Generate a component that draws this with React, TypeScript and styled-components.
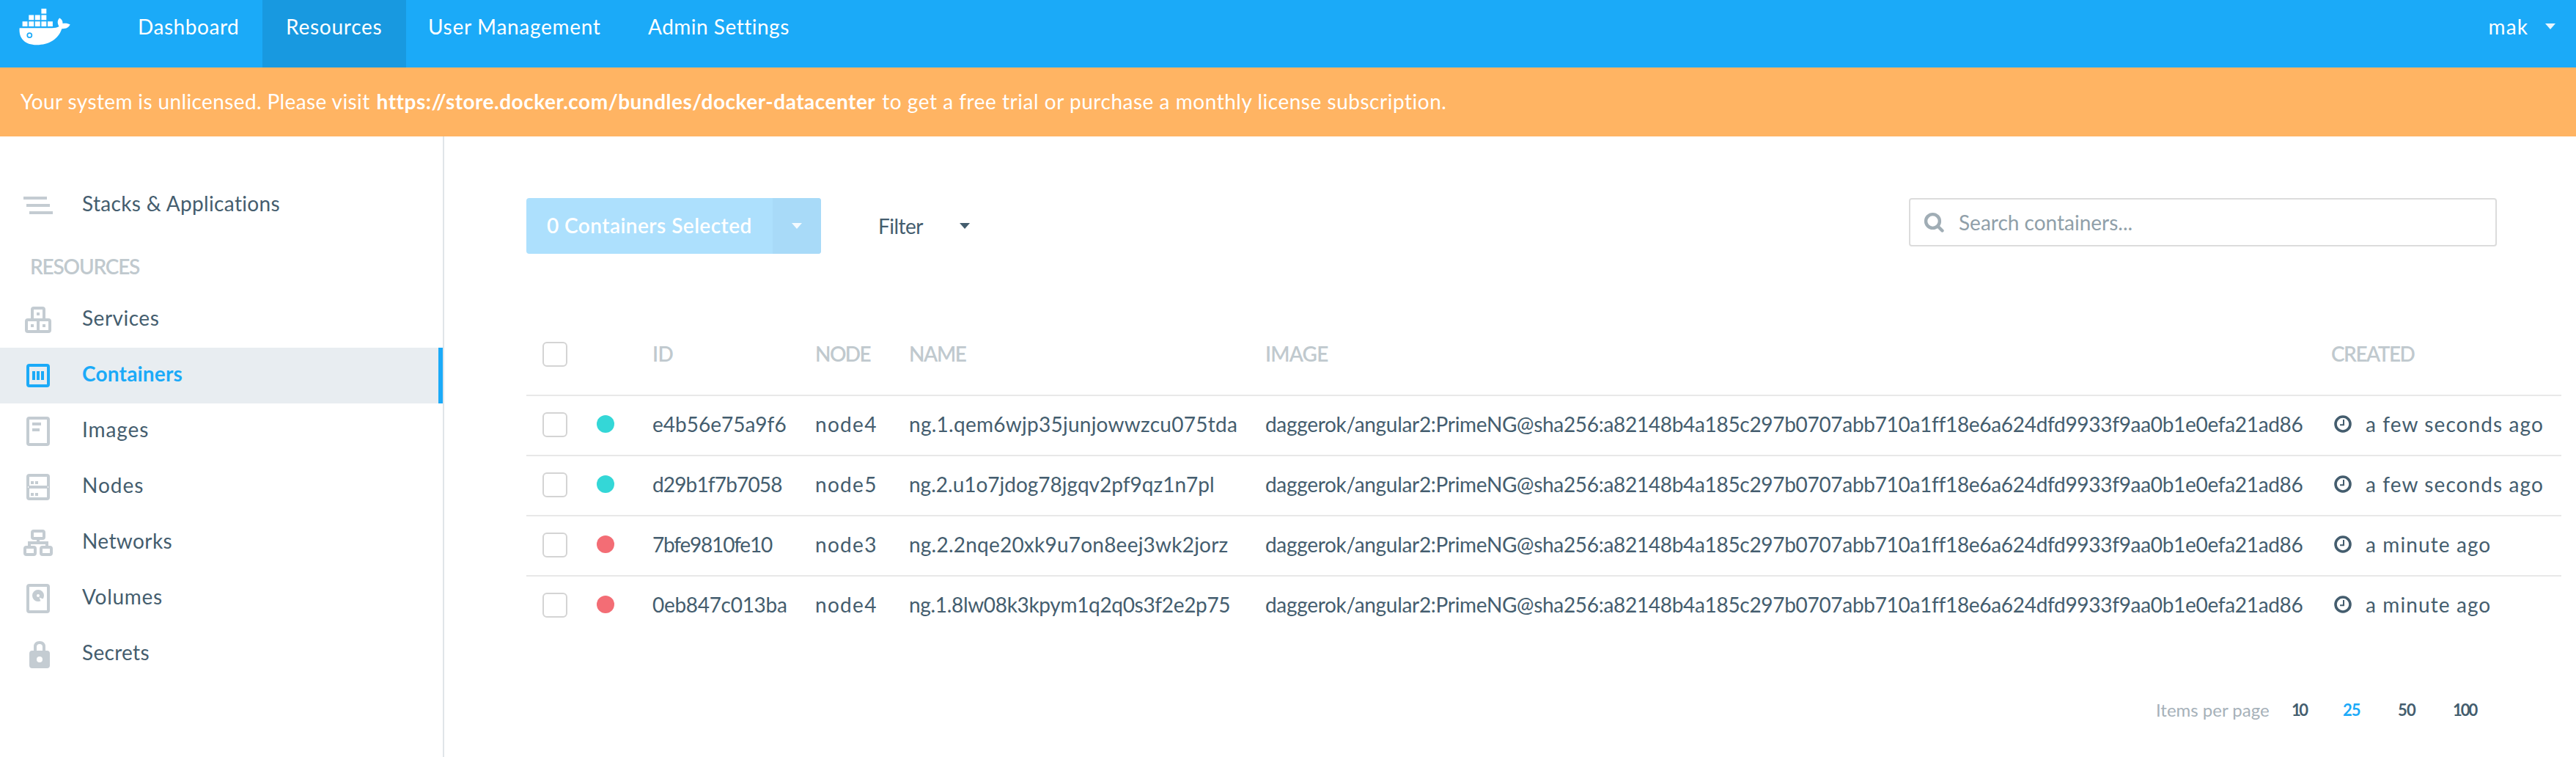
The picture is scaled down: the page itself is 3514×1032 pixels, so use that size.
import React from "react";
import styled, { createGlobalStyle } from "styled-components";

const color = {
  blue: "#1baaf8",
  blueDark: "#1899e0",
  orange: "#ffb463",
  text: "#445d6e",
  muted: "#c0c9ce",
  icon: "#c4ccd2",
  line: "#e8e8e8",
};

const GlobalStyle = createGlobalStyle`
  * { box-sizing: border-box; }
  body {
    margin: 0;
    background: #fff;
    color: ${color.text};
    font: 400 28px/34px Lato, "Open Sans", sans-serif;
  }
`;

const Text = styled.span<{ $ls?: number }>`
  white-space: nowrap;
  letter-spacing: ${(p) => p.$ls ?? 0}px;
`;

const Page = styled.div`
  display: flex;
  flex-direction: column;
  width: 3514px;
  height: 1032px;
  overflow: hidden;
`;

/* Top bar */
const TopBar = styled.header`
  display: flex;
  height: 92px;
  background: ${color.blue};
  color: #fff;
`;

const Brand = styled.div`
  width: 158px;
  padding: 10px 0 0 24px;
`;

const NavTab = styled.a<{ $width: number; $active?: boolean }>`
  width: ${(p) => p.$width}px;
  padding: 19px 0 0 ${(p) => (p.$active ? 32 : 30)}px;
  background: ${(p) => (p.$active ? color.blueDark : "transparent")};
`;

const UserMenu = styled.div`
  display: flex;
  align-items: center;
  gap: 23px;
  height: 34px;
  margin: 19px 28px 0 auto;
`;

/* License banner */
const Banner = styled.div`
  display: flex;
  align-items: center;
  gap: 9px;
  height: 94px;
  padding: 0 0 3px 28px;
  background: ${color.orange};
  color: #fff;
`;

const BannerLink = styled(Text)`
  font-weight: 700;
`;

/* Sidebar */
const Body = styled.div`
  display: flex;
  flex: 1;
`;

const Sidebar = styled.nav`
  width: 606px;
  padding-top: 56px;
  border-right: 2px solid #e0e5e9;
`;

const SideItem = styled.a<{ $active?: boolean }>`
  display: flex;
  align-items: center;
  gap: 36px;
  height: 76px;
  padding-left: 28px;
  color: ${(p) => (p.$active ? color.blue : color.text)};
  font-weight: ${(p) => (p.$active ? 700 : 400)};
  background: ${(p) => (p.$active ? "#e8edf1" : "transparent")};
  border-right: ${(p) => (p.$active ? `6px solid ${color.blue}` : "0")};
`;

const SideLabel = styled(Text)`
  padding-bottom: 6px;
`;

const SideHeading = styled.div`
  height: 80px;
  padding: 28px 0 0 41px;
  color: ${color.muted};
  font-weight: 600;
`;

const IconBox = styled.svg<{ $active?: boolean }>`
  width: 48px;
  height: 48px;
  flex: none;
  color: ${(p) => (p.$active ? color.blue : color.icon)};
  fill: none;
  stroke: currentColor;
  stroke-width: 4;
`;

/* Main area */
const Main = styled.main`
  display: flex;
  flex-direction: column;
  flex: 1;
  padding: 84px 20px 0 112px;
`;

const Toolbar = styled.div`
  display: flex;
  align-items: flex-start;
  height: 158px;
`;

const SplitButton = styled.div`
  display: flex;
  width: 402px;
  height: 76px;
  border-radius: 4px;
  overflow: hidden;
  color: #fff;
  background: #ade0fd;
`;

const SplitLabel = styled.div`
  width: 336px;
  padding: 20px 0 0 28px;
  font-weight: 600;
`;

const SplitCaret = styled.div`
  display: flex;
  flex: 1;
  align-items: center;
  justify-content: center;
  background: #a8daf8;
`;

const FilterMenu = styled.div`
  display: flex;
  align-items: center;
  gap: 50px;
  height: 76px;
  margin-left: 78px;
`;

const Caret = styled.i<{ $color: string }>`
  width: 14px;
  height: 8px;
  background: ${(p) => p.$color};
  clip-path: polygon(0 0, 100% 0, 50% 100%);
`;

const SearchBox = styled.div`
  display: flex;
  align-items: center;
  gap: 20px;
  width: 802px;
  height: 66px;
  margin: 0 88px 0 auto;
  padding-left: 18px;
  border: 2px solid #dcdcdc;
  border-radius: 4px;
  color: #909fa9;
`;

/* Table */
const Row = styled.div`
  display: grid;
  grid-template-columns: 74px 76px 222px 128px 486px 1454px 1fr;
  align-items: center;
  height: 82px;
  padding: 0 0 4px 22px;
  border-bottom: 2px solid ${color.line};

  &:last-child {
    border-bottom-color: transparent;
  }
`;

const HeadRow = styled(Row)`
  height: 112px;
  padding-bottom: 0;
  color: ${color.muted};
  font-weight: 600;
`;

const Checkbox = styled.div`
  width: 34px;
  height: 34px;
  margin-top: 2px;
  border: 2px solid #d4d4d4;
  border-radius: 6px;
`;

const HeadCheckbox = styled(Checkbox)`
  margin-top: 0;
`;

const HeadLabel = styled(Text)`
  padding-bottom: 2px;
`;

const Status = styled.div<{ $up: boolean }>`
  width: 24px;
  height: 24px;
  border-radius: 50%;
  background: ${(p) => (p.$up ? "#34d7d7" : "#f36d75")};
`;

const Created = styled.div`
  display: flex;
  align-items: center;
  gap: 19px;
  padding-left: 4px;
`;

/* Pagination */
const Pager = styled.div`
  display: flex;
  align-items: center;
  height: 32px;
  margin-top: 84px;
  padding-left: 2223px;
  font-size: 24px;
  color: #a6b1b9;
`;

const PagerLabel = styled(Text)`
  width: 185px;
`;

const PageSize = styled(Text)<{ $width: number; $active?: boolean }>`
  width: ${(p) => p.$width}px;
  font-size: 22px;
  font-weight: 700;
  color: ${(p) => (p.$active ? color.blue : color.text)};
`;

const Whale = () => (
  <svg width="74" height="54" viewBox="24 10 74 54" fill="#fff">
    <path d="M56.4 11.8h6.9v6.8h-6.9z" />
    <path d="M39.3 20.5h6.9v6.7h-6.9zM47.8 20.5h6.9v6.7h-6.9zM56.4 20.5h6.9v6.7h-6.9z" />
    <path d="M30.6 29.2h6.9v6.7h-6.9zM39.3 29.2h6.9v6.7h-6.9zM47.8 29.2h6.9v6.7h-6.9zM56.4 29.2h6.9v6.7h-6.9zM65 29.2h6.9v6.7H65z" />
    <path
      fillRule="evenodd"
      d="M26.6 38.2H71c4 0 7-.6 9.6-2.2-2.7-4-2.5-8.3.6-11.4 3.2 1.9 4.5 4.4 4.3 7.5 3.5-.9 6.9-.5 10.2 1.4-2 4-5.5 5.9-11.4 5.7C79.8 53 67 61.2 50 61.2c-16 0-24.5-8.7-23.4-23zM40.3 44.2a3.9 3.9 0 1 0 0 7.8 3.9 3.9 0 0 0 0-7.8z"
    />
    <circle cx="40.3" cy="48.1" r="2.2" />
  </svg>
);

const ClockIcon = () => (
  <svg width="24" height="24" viewBox="0 0 24 24" fill="none" stroke={color.text}>
    <circle cx="12" cy="12" r="10" strokeWidth="3.6" />
    <path d="M13 6v7.2H8" strokeWidth="2" />
  </svg>
);

const SearchIcon = () => (
  <svg width="28" height="28" viewBox="0 0 28 28" fill="none" stroke="#a0adb5">
    <circle cx="12.5" cy="12.5" r="9.4" strokeWidth="4.4" />
    <path d="M19.5 19.5l6 6" strokeWidth="4.4" strokeLinecap="round" />
  </svg>
);

const icons: Record<string, React.ReactNode> = {
  stacks: <path d="M4 14h32M8 24h32M12 34h32" />,
  services: (
    <>
      <path d="M16 24V10q0-2 2-2h12q2 0 2 2v14" />
      <path d="M24 24v16M10 24h28q2 0 2 2v12q0 2-2 2H10q-2 0-2-2V26q0-2 2-2z" />
      <path d="M22 16h4M14 32h4M30 32h4" />
    </>
  ),
  containers: (
    <>
      <rect x="10" y="10" width="28" height="28" rx="2" />
      <path d="M18 18v12M24 18v12M30 18v12" />
    </>
  ),
  images: (
    <>
      <rect x="10" y="6" width="28" height="36" rx="2" />
      <path d="M16 14h12M16 22h10" />
    </>
  ),
  nodes: (
    <>
      <rect x="10" y="8" width="28" height="32" rx="2" />
      <path d="M12 24h24M14 18h4M20 18h4M14 34h4M20 34h4" />
      <path d="M10 24h1M37 24h1" stroke="#fff" strokeWidth="2" />
    </>
  ),
  networks: (
    <>
      <rect x="16" y="8" width="16" height="10" rx="2" />
      <rect x="6" y="30" width="14" height="10" rx="2" />
      <rect x="28" y="30" width="14" height="10" rx="2" />
      <path d="M24 18v6M12 30v-6h24v6" />
    </>
  ),
  volumes: (
    <>
      <rect x="10" y="6" width="28" height="36" rx="2" />
      <circle cx="24" cy="20" r="5" strokeWidth="6" />
      <path d="M25.5 22.5l3 7.5 5-4.5z" fill="#fff" stroke="none" />
    </>
  ),
  secrets: (
    <>
      <path d="M20 20v-6q0-6 6-6t6 6v6" />
      <rect x="14" y="21" width="24" height="20" rx="2" fill="currentColor" />
      <circle cx="26" cy="31" r="4" fill="#fff" stroke="none" />
    </>
  ),
};

const sideItems = [
  { icon: "services", label: "Services", ls: 0.5 },
  { icon: "containers", label: "Containers", ls: 0.2, active: true },
  { icon: "images", label: "Images", ls: 0.9 },
  { icon: "nodes", label: "Nodes", ls: 1 },
  { icon: "networks", label: "Networks", ls: 0.4 },
  { icon: "volumes", label: "Volumes", ls: 0.7 },
  { icon: "secrets", label: "Secrets", ls: 0.3 },
];

const image =
  "daggerok/angular2:PrimeNG@sha256:a82148b4a185c297b0707abb710a1ff18e6a624dfd9933f9aa0b1e0efa21ad86";

const rows = [
  { up: true, id: "e4b56e75a9f6", idLs: 0, node: "node4", name: "ng.1.qem6wjp35junjowwzcu075tda", nameLs: 0.26, age: "a few seconds ago" },
  { up: true, id: "d29b1f7b7058", idLs: -0.85, node: "node5", name: "ng.2.u1o7jdog78jgqv2pf9qz1n7pl", nameLs: 0, age: "a few seconds ago" },
  { up: false, id: "7bfe9810fe10", idLs: -1.2, node: "node3", name: "ng.2.2nqe20xk9u7on8eej3wk2jorz", nameLs: 0.22, age: "a minute ago" },
  { up: false, id: "0eb847c013ba", idLs: -0.3, node: "node4", name: "ng.1.8lw08k3kpym1q2q0s3f2e2p75", nameLs: -0.33, age: "a minute ago" },
];

export default function App() {
  return (
    <Page>
      <GlobalStyle />
      <TopBar>
        <Brand>
          <Whale />
        </Brand>
        <NavTab $width={200}><Text $ls={0.55}>Dashboard</Text></NavTab>
        <NavTab $width={196} $active><Text $ls={0.75}>Resources</Text></NavTab>
        <NavTab $width={300}><Text $ls={0.7}>User Management</Text></NavTab>
        <NavTab $width={260}><Text $ls={0.5}>Admin Settings</Text></NavTab>
        <UserMenu>
          <Text $ls={1.1}>mak</Text>
          <Caret $color="#e8f6fe" />
        </UserMenu>
      </TopBar>
      <Banner>
        <Text $ls={0.38}>Your system is unlicensed. Please visit</Text>
        <BannerLink $ls={0.5}>https://store.docker.com/bundles/docker-datacenter</BannerLink>
        <Text $ls={0.52}>to get a free trial or purchase a monthly license subscription.</Text>
      </Banner>
      <Body>
        <Sidebar>
          <SideItem>
            <IconBox viewBox="0 0 48 48">{icons.stacks}</IconBox>
            <SideLabel $ls={0.35}>Stacks &amp; Applications</SideLabel>
          </SideItem>
          <SideHeading><Text $ls={-1.2}>RESOURCES</Text></SideHeading>
          {sideItems.map((item) => (
            <SideItem key={item.label} $active={item.active}>
              <IconBox viewBox="0 0 48 48" $active={item.active}>{icons[item.icon]}</IconBox>
              <SideLabel $ls={item.ls}>{item.label}</SideLabel>
            </SideItem>
          ))}
        </Sidebar>
        <Main>
          <Toolbar>
            <SplitButton>
              <SplitLabel><Text $ls={0.45}>0 Containers Selected</Text></SplitLabel>
              <SplitCaret><Caret $color="#f4fbff" /></SplitCaret>
            </SplitButton>
            <FilterMenu>
              <Text $ls={-0.5}>Filter</Text>
              <Caret $color={color.text} />
            </FilterMenu>
            <SearchBox>
              <SearchIcon />
              <Text>Search containers...</Text>
            </SearchBox>
          </Toolbar>
          <div>
            <HeadRow>
              <HeadCheckbox />
              <span />
              <HeadLabel $ls={-0.5}>ID</HeadLabel>
              <HeadLabel $ls={-1.6}>NODE</HeadLabel>
              <HeadLabel $ls={-1.4}>NAME</HeadLabel>
              <HeadLabel $ls={-0.8}>IMAGE</HeadLabel>
              <HeadLabel $ls={-1.5}>CREATED</HeadLabel>
            </HeadRow>
            {rows.map((row) => (
              <Row key={row.id}>
                <Checkbox />
                <Status $up={row.up} />
                <Text $ls={row.idLs}>{row.id}</Text>
                <Text $ls={1.3}>{row.node}</Text>
                <Text $ls={row.nameLs}>{row.name}</Text>
                <Text $ls={-0.31}>{image}</Text>
                <Created>
                  <ClockIcon />
                  <Text $ls={1.1}>{row.age}</Text>
                </Created>
              </Row>
            ))}
          </div>
          <Pager>
            <PagerLabel>Items per page</PagerLabel>
            <PageSize $width={70} $ls={-2.5}>10</PageSize>
            <PageSize $width={75} $ls={-1} $active>25</PageSize>
            <PageSize $width={75} $ls={-0.7}>50</PageSize>
            <PageSize $width={60} $ls={-2}>100</PageSize>
          </Pager>
        </Main>
      </Body>
    </Page>
  );
}
